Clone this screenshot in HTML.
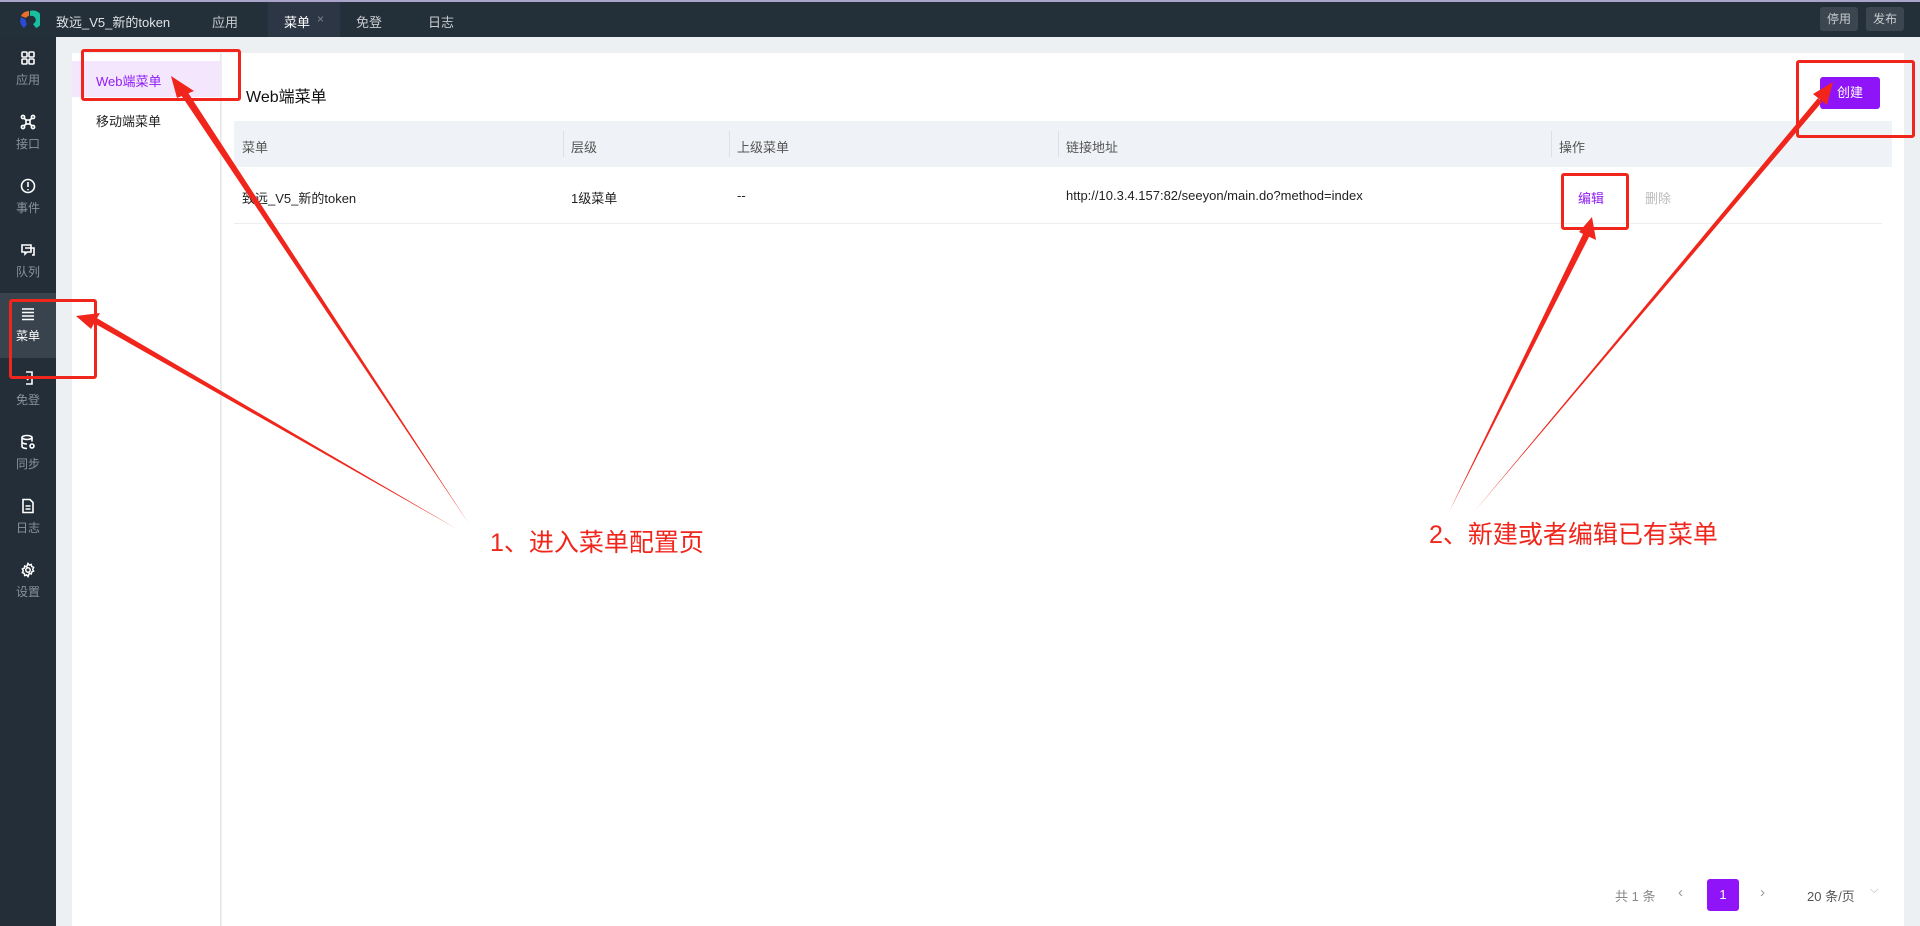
<!DOCTYPE html>
<html><head><meta charset="utf-8"><style>
*{margin:0;padding:0;box-sizing:border-box}
body{width:1920px;height:926px;overflow:hidden;background:#edf0f3;font-family:"Liberation Sans","Noto Sans CJK SC",sans-serif;font-size:13px;color:#333;position:relative}
.top{position:absolute;left:0;top:0;width:1920px;height:37px;background:#232f39;border-top:2px solid #a9a4c9}
.top span{position:absolute;top:10px;color:#c8ccd0;font-size:13px}
.side{position:absolute;left:0;top:37px;width:56px;height:889px;background:#232e38}
.si{position:absolute;left:0;width:56px;text-align:center;color:#8a939b;font-size:12px}
.si svg{display:block;margin:0 auto 5px}
.abs{position:absolute}
.th{position:absolute;top:137px;color:#555;font-size:13px}
.td{position:absolute;top:188px;color:#222;font-size:13px}
.dv{position:absolute;top:131px;width:1px;height:26px;background:#dde1e6}
.box{position:absolute;border:3px solid #f0261c;border-radius:3px}
</style></head><body>
<div class="top">
 <svg class="abs" style="left:18px;top:7px" width="22" height="22" viewBox="0 0 22 22"><path d="M11 2a9 9 0 0 0-8 5l5 2a4 4 0 0 1 3-2z" fill="#e8702a"/><path d="M3 8a9 9 0 0 0 3 11l3-4a4 4 0 0 1-1-4z" fill="#2a4bd8"/><path d="M12 7a4 4 0 0 1 3 8l3 4a9 9 0 0 0-6-17z" fill="#19c0a0"/></svg>
 <span style="left:56px;color:#e0e3e6">致远_V5_新的token</span>
 <span style="left:212px">应用</span>
 <div class="abs" style="left:268px;top:0;width:72px;height:35px;background:#2c3644"></div>
 <span style="left:284px;color:#fff">菜单</span><span style="left:317px;color:#7d8690;font-size:12px">×</span>
 <span style="left:356px">免登</span>
 <span style="left:428px">日志</span>
 <div class="abs" style="left:1820px;top:5px;width:38px;height:24px;background:#3b4650;border-radius:3px;color:#c8ccd0;font-size:12px;text-align:center;line-height:24px">停用</div>
 <div class="abs" style="left:1866px;top:5px;width:38px;height:24px;background:#3b4650;border-radius:3px;color:#c8ccd0;font-size:12px;text-align:center;line-height:24px">发布</div>
</div>
<div class="side">
 <div class="si" style="top:13px"><svg width="16" height="16" viewBox="0 0 16 16" fill="none" stroke="#fff" stroke-width="1.6"><rect x="2" y="2" width="5" height="5" rx="1"/><rect x="9" y="2" width="5" height="5" rx="1"/><rect x="2" y="9" width="5" height="5" rx="1"/><rect x="9" y="9" width="5" height="5" rx="1"/></svg>应用</div>
 <div class="si" style="top:77px"><svg width="16" height="16" viewBox="0 0 16 16" fill="none" stroke="#fff" stroke-width="1.6"><circle cx="3" cy="3" r="1.6"/><circle cx="13" cy="3" r="1.6"/><circle cx="3" cy="13" r="1.6"/><circle cx="13" cy="13" r="1.6"/><rect x="6" y="6" width="4" height="4"/><path d="M4 4l2 2M12 4l-2 2M4 12l2-2M12 12l-2-2"/></svg>接口</div>
 <div class="si" style="top:141px"><svg width="16" height="16" viewBox="0 0 16 16" fill="none" stroke="#fff" stroke-width="1.6"><circle cx="8" cy="8" r="6.5"/><path d="M8 4v5M8 11v1.2"/></svg>事件</div>
 <div class="si" style="top:205px"><svg width="16" height="16" viewBox="0 0 16 16" fill="none" stroke="#fff" stroke-width="1.6"><path d="M2 3h9v7H7l-2 2v-2H2z"/><path d="M5 6h9v7h-2"/></svg>队列</div>
 <div class="abs" style="left:0;top:256px;width:56px;height:65px;background:#38434e"></div>
 <div class="si" style="top:269px;color:#fff"><svg width="16" height="16" viewBox="0 0 16 16" stroke="#fff" stroke-width="1.6"><path d="M2 3h12M2 6.5h12M2 10h12M2 13.5h12"/></svg>菜单</div>
 <div class="si" style="top:333px"><svg width="16" height="16" viewBox="0 0 16 16" fill="none" stroke="#fff" stroke-width="1.6"><path d="M6 2h6v12H6M3 8h6M7 6l2 2-2 2"/></svg>免登</div>
 <div class="si" style="top:397px"><svg width="16" height="16" viewBox="0 0 16 16" fill="none" stroke="#fff" stroke-width="1.6"><ellipse cx="7" cy="3.5" rx="5" ry="2"/><path d="M2 3.5v9c0 1 2 2 5 2M12 3.5v4M2 8c0 1 2 2 5 2"/><circle cx="12" cy="12" r="2"/></svg>同步</div>
 <div class="si" style="top:461px"><svg width="16" height="16" viewBox="0 0 16 16" fill="none" stroke="#fff" stroke-width="1.6"><path d="M3 1.5h7l3 3v10H3z"/><path d="M5.5 8h5M5.5 11h5"/></svg>日志</div>
 <div class="si" style="top:525px"><svg width="16" height="16" viewBox="0 0 16 16" fill="none" stroke="#fff" stroke-width="1.5"><circle cx="8" cy="8" r="2.2"/><path d="M8 1.5l1.3 1.6 2-.6.4 2 1.9.9-.9 1.9.9 1.7-1.9.9-.4 2-2-.6L8 14.5l-1.3-1.6-2 .6-.4-2-1.9-.9.9-1.7-.9-1.9 1.9-.9.4-2 2 .6z"/></svg>设置</div>
</div>
<div class="abs" style="left:72px;top:53px;width:149px;height:873px;background:#fff;border-right:1px solid #e8e8e8"></div>
<div class="abs" style="left:72px;top:61px;width:149px;height:36px;background:#f3e6fd"></div>
<div class="abs" style="left:96px;top:71px;color:#8f1cf5;font-size:13px">Web端菜单</div>
<div class="abs" style="left:96px;top:111px;color:#222;font-size:13px">移动端菜单</div>
<div class="abs" style="left:222px;top:53px;width:1682px;height:873px;background:#fff"></div>
<div class="abs" style="left:246px;top:83px;font-size:16px;color:#111">Web端菜单</div>
<div class="abs" style="left:1820px;top:77px;width:60px;height:32px;background:#8f14f8;border-radius:3px;color:#fff;text-align:center;line-height:32px;font-size:13px">创建</div>
<div class="abs" style="left:234px;top:121px;width:1658px;height:46px;background:#eff2f6"></div>
<div class="abs" style="left:234px;top:223px;width:1648px;height:1px;background:#eceff2"></div>
<div class="th" style="left:242px">菜单</div>
<div class="dv" style="left:563px"></div><div class="th" style="left:571px">层级</div>
<div class="dv" style="left:729px"></div><div class="th" style="left:737px">上级菜单</div>
<div class="dv" style="left:1058px"></div><div class="th" style="left:1066px">链接地址</div>
<div class="dv" style="left:1551px"></div><div class="th" style="left:1559px">操作</div>
<div class="td" style="left:242px">致远_V5_新的token</div>
<div class="td" style="left:571px">1级菜单</div>
<div class="td" style="left:737px">--</div>
<div class="td" style="left:1066px">http://10.3.4.157:82/seeyon/main.do?method=index</div>
<div class="td" style="left:1578px;color:#8f1cf5">编辑</div>
<div class="td" style="left:1645px;color:#bbb">删除</div>
<div class="abs" style="left:1615px;top:886px;color:#888;font-size:13px">共 1 条</div>
<div class="abs" style="left:1678px;top:884px;color:#999;font-size:15px">‹</div>
<div class="abs" style="left:1707px;top:879px;width:32px;height:32px;background:#8f14f8;border-radius:3px;color:#fff;text-align:center;line-height:32px">1</div>
<div class="abs" style="left:1760px;top:884px;color:#999;font-size:15px">›</div>
<div class="abs" style="left:1807px;top:886px;color:#555;font-size:13px">20 条/页</div>
<div class="abs" style="left:1870px;top:884px;color:#aaa;font-size:11px">⌵</div>
<div class="box" style="left:81px;top:49px;width:160px;height:52px"></div>
<div class="box" style="left:9px;top:299px;width:88px;height:80px"></div>
<div class="box" style="left:1561px;top:173px;width:68px;height:57px"></div>
<div class="box" style="left:1796px;top:60px;width:119px;height:78px"></div>
<svg class="abs" style="left:0;top:0" width="1920" height="926">
 <g fill="#f0261c">
  <polygon points="469,524 179,92 185,88"/><polygon points="171,76 194,91 177,98"/>
  <polygon points="457,529 92,322 95,317"/><polygon points="76,316 100,313 91,329"/>
  <polygon points="1449,512 1584,232 1590,235"/><polygon points="1592,217 1596,240 1579,232"/>
  <polygon points="1474,512 1818,98 1822,102"/><polygon points="1833,82 1827,105 1813,94"/>
 </g>
 <text x="490" y="551" fill="#f0261c" font-size="25" font-family="Liberation Sans,Noto Sans CJK SC,sans-serif">1、进入菜单配置页</text>
 <text x="1429" y="543" fill="#f0261c" font-size="25" font-family="Liberation Sans,Noto Sans CJK SC,sans-serif">2、新建或者编辑已有菜单</text>
</svg>
</body></html>
